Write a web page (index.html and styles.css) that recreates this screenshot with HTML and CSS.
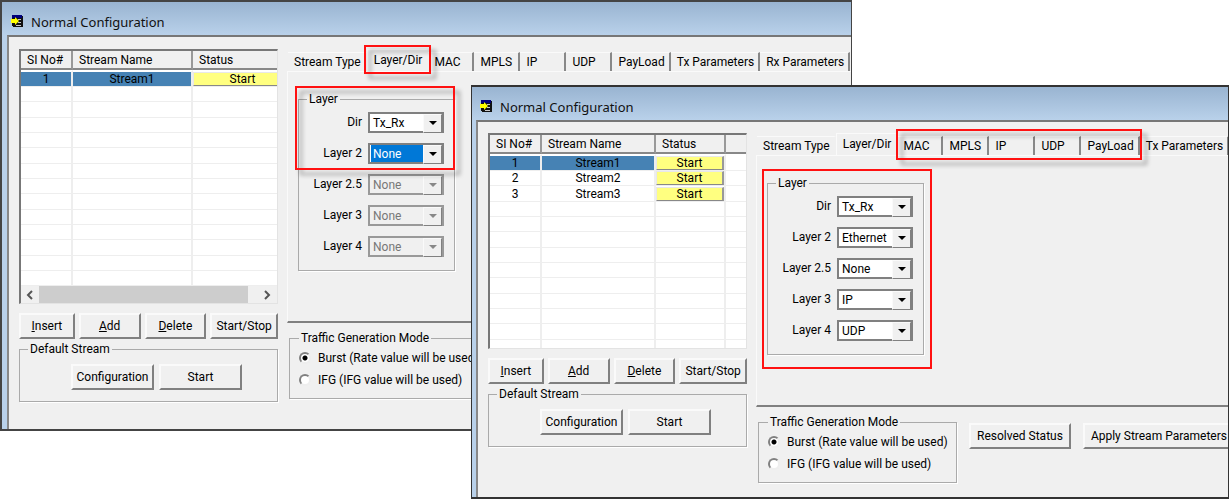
FILE: index.html
```html
<!DOCTYPE html>
<html lang="en">
  <head>
    <meta charset="UTF-8" />
    <meta name="viewport" content="width=device-width, initial-scale=1.0" />
    <title>Normal Configuration</title>
    <link rel="stylesheet" href="styles.css">
  </head>
  <body>
    <main class="desktop">
      <section class="window window-back">
        <header class="titlebar">
          <svg class="app-icon" viewBox="0 0 13 13">
            <path fill="#111" d="M1 0h10v1h1v11H2v-1H1z" />
            <path fill="#00007b" d="M1 0h10v3H1z" />
            <path stroke="#c8c8c8" d="M7 4.500h3M7 7.500h3M5 10.500h5" />
            <path fill="#ff0" d="M0 4h4V2l4 4-4 4V8H0z" />
          </svg>
          <h2>Normal Configuration</h2>
        </header>
        <div class="client">
          <div class="left">
            <div class="list">
              <table>
                <colgroup><col class="c-no"><col class="c-name"><col class="c-status"></colgroup>
                <thead>
                  <tr><th>SI No#</th><th>Stream Name</th><th>Status</th></tr>
                </thead>
                <tbody>
                  <tr class="selected"><td>1</td><td>Stream1</td><td><button class="start">Start</button></td></tr>
                  <tr><td></td><td></td><td></td></tr>
                  <tr><td></td><td></td><td></td></tr>
                  <tr><td></td><td></td><td></td></tr>
                  <tr><td></td><td></td><td></td></tr>
                  <tr><td></td><td></td><td></td></tr>
                  <tr><td></td><td></td><td></td></tr>
                  <tr><td></td><td></td><td></td></tr>
                  <tr><td></td><td></td><td></td></tr>
                  <tr><td></td><td></td><td></td></tr>
                  <tr><td></td><td></td><td></td></tr>
                  <tr><td></td><td></td><td></td></tr>
                  <tr><td></td><td></td><td></td></tr>
                  <tr><td></td><td></td><td></td></tr>
                </tbody>
              </table>
              <div class="scrollbar">
                <button aria-label="Scroll left"><svg viewBox="0 0 8 10"><path d="M6 1L2 5l4 4" /></svg></button>
                <div class="thumb"></div>
                <button aria-label="Scroll right"><svg viewBox="0 0 8 10"><path d="M2 1l4 4-4 4" /></svg></button>
              </div>
            </div>
            <div class="actions">
              <button class="btn"><u>I</u>nsert</button>
              <button class="btn"><u>A</u>dd</button>
              <button class="btn"><u>D</u>elete</button>
              <button class="btn">Start/Stop</button>
            </div>
            <fieldset class="group default-stream">
              <legend>Default Stream</legend>
              <button class="btn">Configuration</button>
              <button class="btn">Start</button>
            </fieldset>
          </div>
          <div class="right">
            <div class="tabs" role="tablist">
              <button class="tab" role="tab">Stream Type</button>
              <button class="tab active" role="tab" aria-selected="true">Layer/Dir</button>
              <button class="tab" role="tab">MAC</button>
              <button class="tab" role="tab">MPLS</button>
              <button class="tab" role="tab">IP</button>
              <button class="tab" role="tab">UDP</button>
              <button class="tab" role="tab">PayLoad</button>
              <button class="tab" role="tab">Tx Parameters</button>
              <button class="tab" role="tab">Rx Parameters</button>
            </div>
            <div class="panel" role="tabpanel">
              <fieldset class="group layers">
                <legend>Layer</legend>
                <label for="a-dir">Dir</label>
                <span class="combo"><select id="a-dir"><option>Tx_Rx</option></select></span>
                <label for="a-l2">Layer 2</label>
                <span class="combo"><select id="a-l2" class="current"><option>None</option></select></span>
                <label for="a-l25">Layer 2.5</label>
                <span class="combo off"><select id="a-l25" disabled><option>None</option></select></span>
                <label for="a-l3">Layer 3</label>
                <span class="combo off"><select id="a-l3" disabled><option>None</option></select></span>
                <label for="a-l4">Layer 4</label>
                <span class="combo off"><select id="a-l4" disabled><option>None</option></select></span>
              </fieldset>
            </div>
            <div class="bottom">
              <fieldset class="group mode">
                <legend>Traffic Generation Mode</legend>
                <label><input type="radio" name="mode-a" checked />Burst (Rate value will be used)</label>
                <label><input type="radio" name="mode-a" />IFG (IFG value will be used)</label>
              </fieldset>
            </div>
            <div class="mark mark-tab"></div>
            <div class="mark mark-dir"></div>
          </div>
        </div>
      </section>

      <section class="window window-front">
        <header class="titlebar">
          <svg class="app-icon" viewBox="0 0 13 13">
            <path fill="#111" d="M1 0h10v1h1v11H2v-1H1z" />
            <path fill="#00007b" d="M1 0h10v3H1z" />
            <path stroke="#c8c8c8" d="M7 4.500h3M7 7.500h3M5 10.500h5" />
            <path fill="#ff0" d="M0 4h4V2l4 4-4 4V8H0z" />
          </svg>
          <h2>Normal Configuration</h2>
        </header>
        <div class="client">
          <div class="left">
            <div class="list">
              <table>
                <colgroup><col class="c-no"><col class="c-name"><col class="c-status"><col></colgroup>
                <thead>
                  <tr><th>SI No#</th><th>Stream Name</th><th>Status</th><th></th></tr>
                </thead>
                <tbody>
                  <tr class="selected"><td>1</td><td>Stream1</td><td><button class="start">Start</button></td><td></td></tr>
                  <tr><td>2</td><td>Stream2</td><td><button class="start">Start</button></td><td></td></tr>
                  <tr><td>3</td><td>Stream3</td><td><button class="start">Start</button></td><td></td></tr>
                  <tr><td></td><td></td><td></td><td></td></tr>
                  <tr><td></td><td></td><td></td><td></td></tr>
                  <tr><td></td><td></td><td></td><td></td></tr>
                  <tr><td></td><td></td><td></td><td></td></tr>
                  <tr><td></td><td></td><td></td><td></td></tr>
                  <tr><td></td><td></td><td></td><td></td></tr>
                  <tr><td></td><td></td><td></td><td></td></tr>
                  <tr><td></td><td></td><td></td><td></td></tr>
                  <tr><td></td><td></td><td></td><td></td></tr>
                  <tr><td></td><td></td><td></td><td></td></tr>
                </tbody>
              </table>
            </div>
            <div class="actions">
              <button class="btn"><u>I</u>nsert</button>
              <button class="btn"><u>A</u>dd</button>
              <button class="btn"><u>D</u>elete</button>
              <button class="btn">Start/Stop</button>
            </div>
            <fieldset class="group default-stream">
              <legend>Default Stream</legend>
              <button class="btn">Configuration</button>
              <button class="btn">Start</button>
            </fieldset>
          </div>
          <div class="right">
            <div class="tabs" role="tablist">
              <button class="tab" role="tab">Stream Type</button>
              <button class="tab active" role="tab" aria-selected="true">Layer/Dir</button>
              <button class="tab" role="tab">MAC</button>
              <button class="tab" role="tab">MPLS</button>
              <button class="tab" role="tab">IP</button>
              <button class="tab" role="tab">UDP</button>
              <button class="tab" role="tab">PayLoad</button>
              <button class="tab" role="tab">Tx Parameters</button>
            </div>
            <div class="panel" role="tabpanel">
              <fieldset class="group layers">
                <legend>Layer</legend>
                <label for="b-dir">Dir</label>
                <span class="combo"><select id="b-dir"><option>Tx_Rx</option></select></span>
                <label for="b-l2">Layer 2</label>
                <span class="combo"><select id="b-l2"><option>Ethernet</option></select></span>
                <label for="b-l25">Layer 2.5</label>
                <span class="combo"><select id="b-l25"><option>None</option></select></span>
                <label for="b-l3">Layer 3</label>
                <span class="combo"><select id="b-l3"><option>IP</option></select></span>
                <label for="b-l4">Layer 4</label>
                <span class="combo"><select id="b-l4"><option>UDP</option></select></span>
              </fieldset>
            </div>
            <div class="bottom">
              <fieldset class="group mode">
                <legend>Traffic Generation Mode</legend>
                <label><input type="radio" name="mode-b" checked />Burst (Rate value will be used)</label>
                <label><input type="radio" name="mode-b" />IFG (IFG value will be used)</label>
              </fieldset>
              <button class="btn wide">Resolved Status</button>
              <button class="btn wide">Apply Stream Parameters</button>
            </div>
            <div class="mark mark-tabs"></div>
            <div class="mark mark-layers"></div>
          </div>
        </div>
      </section>
    </main>
  </body>
</html>
```
FILE: styles.css
```css
* {
  box-sizing: border-box;
}
body {
  margin: 0;
  background: #fff;
  color: #000;
  font: 12px/14px Roboto, "Liberation Sans", sans-serif;
}
button,
select {
  font: inherit;
  color: inherit;
}
.desktop {
  position: relative;
  min-height: 100vh;
  overflow: hidden;
}

/* windows */
.window {
  position: absolute;
  overflow: hidden;
  background: #b9d1ea;
  border: 1px solid #333;
  border-width: 2px 1px 2px 1px;
}
.window-back {
  top: 0;
  left: 0;
  width: 852px;
  max-width: 100%;
  border-left-width: 2px;
  border-color: #444;
  padding-left: 5px;
}
.window-front {
  top: 85px;
  left: 471px;
  right: 0;
  padding-left: 4px;
}
.titlebar {
  display: flex;
  align-items: center;
  gap: 7px;
  height: 33px;
  margin-left: -5px;
  padding: 6px 0 0 9px;
  background: linear-gradient(#99b4d1, #b9d1ea);
}
.titlebar h2 {
  margin: 0;
  font: 13px/18px "Noto Sans", "Open Sans", sans-serif;
  color: #111;
}
.app-icon {
  width: 13px;
  height: 13px;
}
.client {
  display: flex;
  gap: 9px;
  padding: 12px 0 27px 10px;
  background: #f0f0f0;
  border-top: 2px solid #777;
  border-left: 2px solid #888;
}
.window-front .client {
  padding-top: 11px;
  padding-bottom: 14px;
}
.left {
  flex: 0 0 259px;
  min-width: 0;
}
.right {
  position: relative;
  flex: 1;
  min-width: 0;
}

/* stream list */
.list {
  height: 255px;
  overflow: hidden;
  background: #fff;
  border: 1px solid #e3e3e3;
  border-top: 2px solid #777;
  border-left: 2px solid #777;
}
.window-front .list {
  height: 216px;
}
table {
  width: 100%;
  table-layout: fixed;
  border-collapse: separate;
  border-spacing: 0;
}
.window-back table {
  width: 272px;
}
.c-no {
  width: 52px;
}
.c-name {
  width: 120px;
}
.window-front .c-name {
  width: 114px;
}
.window-front .c-status {
  width: 70px;
}
th {
  height: 19px;
  padding: 0 0 0 6px;
  background: #f0f0f0;
  border-right: 2px solid #999;
  border-bottom: 2px solid #888;
  text-align: left;
  font-weight: normal;
}
th:last-child {
  border-right: 0;
}
tbody tr {
  height: 15px;
}
tbody tr:nth-child(3n) {
  height: 16px;
}
tbody .selected {
  height: 17px;
}
td {
  padding: 0;
  border-right: 2px solid #eee;
  border-bottom: 1px solid #eee;
  text-align: center;
  line-height: 14px;
}
td:last-child {
  border-right: 0;
}
.selected td {
  background: #4682b4;
  border-top: 2px solid #fff;
}
.selected td:nth-child(n + 3) {
  background: #fff;
}
.start {
  display: block;
  width: 100%;
  height: 14px;
  padding: 0;
  overflow: hidden;
  background: #ffff80;
  border: 1px solid #e8e8e8;
  border-right: 2px solid #999;
  border-bottom-color: #888;
  line-height: 13px;
}
.scrollbar {
  display: flex;
  height: 17px;
  background: #f0f0f0;
}
.scrollbar button {
  flex: none;
  width: 18px;
  padding: 0;
  border: 0;
  background: none;
}
.scrollbar button:last-child {
  width: 20px;
  margin-left: 9px;
}
.scrollbar svg {
  display: block;
  width: 8px;
  height: 10px;
  margin: 0 auto;
  fill: none;
  stroke: #555;
  stroke-width: 2;
}
.thumb {
  flex: 1;
  background: #cdcdcd;
}

/* buttons and group boxes */
.btn {
  height: 26px;
  padding: 0;
  background: #f0f0f0;
  border: 2px solid #808080;
  border-top-color: #fafafa;
  border-left-color: #fafafa;
  white-space: nowrap;
}
.actions {
  display: grid;
  grid-template-columns: 56fr 62fr 62fr 68fr;
  gap: 4px;
  margin: 9px 0 3px;
}
.group {
  min-width: 0;
  margin: 0;
  padding: 0;
  border: 1px solid #aaa;
  box-shadow: 1px 1px #fff;
}
.group legend {
  margin-left: 8px;
  padding: 0 2px;
}
.default-stream {
  display: grid;
  grid-template-columns: 83px 83px;
  justify-content: end;
  gap: 5px;
  padding: 8px 35px 11px 0;
}

/* tabs */
.tabs {
  display: flex;
  align-items: flex-end;
  height: 22px;
  padding-left: 1px;
}
.tab {
  flex: none;
  min-width: 46px;
  height: 19px;
  padding: 0 4px 0 6px;
  background: #f0f0f0;
  border: 0;
  border-top: 1px solid #fafafa;
  border-right: 2px solid #888;
  text-align: left;
  white-space: nowrap;
}
.tab:first-child {
  border-right-color: #f0f0f0;
}
.tab.active {
  height: 22px;
  padding-bottom: 2px;
  border-left: 1px solid #fafafa;
  border-right-color: #f0f0f0;
}
.panel {
  height: 252px;
  padding: 20px 0 0 10px;
  border: 1px solid #fafafa;
  border-right: 0;
  border-bottom: 2px solid #808080;
}
.layers {
  display: grid;
  grid-template-columns: 1fr 76px;
  gap: 10px 6px;
  width: 157px;
  padding: 6px 10px 13px 0;
}
.layers label {
  line-height: 21px;
  text-align: right;
}
.combo {
  position: relative;
  height: 21px;
  background: #fff;
  border: 2px solid #808080;
}
.combo select {
  display: block;
  width: 100%;
  height: 17px;
  padding: 0 18px 0 1px;
  appearance: none;
  background: none;
  border: 0;
  border-radius: 0;
  text-indent: 2px;
  outline: 0;
  opacity: 1;
}
.combo::before {
  content: "";
  position: absolute;
  top: 0;
  right: 0;
  width: 17px;
  height: 17px;
  background: #f0f0f0;
  border: 1px solid #fafafa;
  border-right-color: #808080;
  border-bottom-color: #808080;
  pointer-events: none;
}
.combo::after {
  content: "";
  position: absolute;
  top: 7px;
  right: 5px;
  border: 4px solid transparent;
  border-top-color: #000;
  border-bottom: 0;
  pointer-events: none;
}
.combo .current {
  background: #0078d7 content-box;
  color: #fff;
}
.combo.off {
  background: #f0f0f0;
  border-color: #999;
  color: #777;
}
.combo.off::after {
  border-top-color: #888;
}

/* bottom row */
.bottom {
  display: flex;
  gap: 12px;
  padding: 8px 0 0 2px;
}
.mode {
  display: grid;
  gap: 8px;
  flex: 0 0 199px;
  padding: 6px 0 11px 9px;
}
.mode legend {
  margin-left: 0;
}
.mode label {
  display: flex;
  align-items: center;
  gap: 7px;
  white-space: nowrap;
}
.mode input {
  flex: none;
  width: 12px;
  height: 12px;
  margin: 0;
  appearance: none;
  background: #fff;
  border: 2px solid #808080;
  border-right-color: #eee;
  border-bottom-color: #eee;
  border-radius: 50%;
}
.mode input:checked {
  background: radial-gradient(circle, #000 2px, #fff 3px);
}
.wide {
  flex: none;
  margin-top: 8px;
  padding: 0 6px;
}

/* red callouts drawn over the windows */
.mark {
  position: absolute;
  border: 2px solid #f11;
  pointer-events: none;
}
.mark-tab,
.mark-dir,
.mark-tabs {
  filter: drop-shadow(5px 5px 2px rgba(0, 0, 0, 0.35));
}
.mark-tab {
  top: -4px;
  left: 77px;
  width: 67px;
  height: 29px;
}
.mark-dir {
  top: 37px;
  left: 8px;
  width: 160px;
  height: 84px;
}
.mark-tabs {
  top: -4px;
  left: 140px;
  width: 246px;
  height: 31px;
}
.mark-layers {
  top: 36px;
  left: 6px;
  width: 170px;
  height: 200px;
}
```
